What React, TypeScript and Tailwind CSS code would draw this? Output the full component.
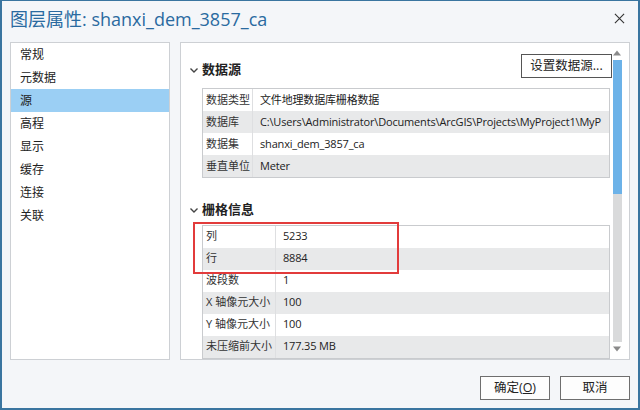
import React from "react";

const font = { fontFamily: '"Open Sans", "Noto Sans CJK SC", "Noto Sans", sans-serif' };

function Chevron() {
  return (
    <svg width="10" height="8" viewBox="0 0 10 8" className="shrink-0">
      <path d="M1.5 2.5 L5 6 L8.5 2.5" fill="none" stroke="#444" strokeWidth="1.4" />
    </svg>
  );
}

type Row = [string, string];

function Table({ rows, labelW }: { rows: Row[]; labelW: string }) {
  return (
    <div className="ml-[21px] mr-[2px] border border-[#c9cbce] bg-white text-[11px] text-[#222]">
      {rows.map(([k, v], i) => (
        <div
          key={i}
          className={`flex h-[22px] items-center ${i % 2 === 1 ? "bg-[#e8e9ea]" : "bg-white"}`}
        >
          <div className={`${labelW} shrink-0 h-full flex items-center pl-[3px] border-r border-[#dedfe1] text-[#333] text-[11px] whitespace-nowrap overflow-hidden`}>
            {k}
          </div>
          <div className="flex-1 min-w-0 pl-[7px] whitespace-nowrap overflow-hidden tracking-[-0.17px]">{v}</div>
        </div>
      ))}
    </div>
  );
}

export default function App() {
  const nav = ["常规", "元数据", "源", "高程", "显示", "缓存", "连接", "关联"];
  return (
    <div
      style={font}
      className="w-[640px] h-[410px] bg-[#f4f6f9] border-2 border-t border-[#3a75a0] flex flex-col overflow-hidden"
    >
      <div className="h-[41px] flex items-center justify-between pl-[8px] pr-[8px] pb-[6px] shrink-0">
        <div className="text-[18px] text-[#2a6aa0] leading-none">图层属性: shanxi_dem_3857_ca</div>
        <svg width="11" height="11" viewBox="0 0 12 12" className="mr-[5px]">
          <path d="M1 1 L11 11 M11 1 L1 11" stroke="#333" strokeWidth="1.2" />
        </svg>
      </div>
      <div className="flex gap-[10px] px-[8px] h-[318px] shrink-0">
        <div className="w-[160px] shrink-0 bg-white border border-[#cdd0d4] text-[12px] text-[#222]">
          {nav.map((n) => (
            <div
              key={n}
              className={`h-[23px] flex items-center pl-[9px] ${n === "源" ? "bg-[#9bcff4]" : ""}`}
            >
              {n}
            </div>
          ))}
        </div>
        <div className="flex-1 min-w-0 bg-white border border-[#cdd0d4] flex">
          <div className="flex-1 min-w-0 flex flex-col overflow-hidden pt-[11px] pb-[6px] relative">
            <div className="flex items-start justify-between pl-[8px] pr-[0px]">
              <div className="flex items-center gap-[3px] mt-[5px] h-[22px]">
                <Chevron />
                <span className="text-[13px] font-semibold text-[#222]">数据源</span>
              </div>
              <div className="h-[24px] w-[91px] border border-[#555] bg-white flex items-center justify-center text-[12.5px] text-[#222]">
                设置数据源...
              </div>
            </div>
            <div className="mt-[7px]">
              <Table
                labelW="w-[50px]"
                rows={[
                  ["数据类型", "文件地理数据库栅格数据"],
                  ["数据库", "C:\\Users\\Administrator\\Documents\\ArcGIS\\Projects\\MyProject1\\MyP"],
                  ["数据集", "shanxi_dem_3857_ca"],
                  ["垂直单位", "Meter"],
                ]}
              />
            </div>
            <div className="flex items-center gap-[3px] pl-[8px] mt-[22px] h-[22px]">
              <Chevron />
              <span className="text-[13px] font-semibold text-[#222]">栅格信息</span>
            </div>
            <div className="mt-[5px]">
              <Table
                labelW="w-[73px]"
                rows={[
                  ["列", "5233"],
                  ["行", "8884"],
                  ["波段数", "1"],
                  ["X 轴像元大小", "100"],
                  ["Y 轴像元大小", "100"],
                  ["未压缩前大小", "177.35 MB"],
                ]}
              />
            </div>
            <div className="absolute left-[12px] top-[179px] w-[206px] h-[52px] border-[2.5px] border-[#e23b3b]" />
          </div>
          <div className="w-[10px] shrink-0 mr-[7px] mt-[6px] mb-[6px] flex flex-col items-center">
            <svg width="10" height="8" viewBox="0 0 10 8">
              <path d="M5 1.5 L9 6.5 L1 6.5 Z" fill="#8a8a8a" />
            </svg>
            <div className="w-[9px] flex-1 bg-[#d9dadb] mt-[3px] mb-[3px] flex flex-col">
              <div className="h-[134px] bg-[#6cb2e8]" />
            </div>
            <svg width="10" height="8" viewBox="0 0 10 8">
              <path d="M1 1.5 L9 1.5 L5 6.5 Z" fill="#8a8a8a" />
            </svg>
          </div>
        </div>
      </div>
      <div className="flex justify-end gap-[10px] pr-[8px] mt-[16px]">
        <div className="w-[70px] h-[24px] border border-[#6e6e6e] bg-[#fdfdfd] flex items-center justify-center text-[12.5px] text-[#222]">
          确定(<span className="underline">O</span>)
        </div>
        <div className="w-[70px] h-[24px] border border-[#6e6e6e] bg-[#fdfdfd] flex items-center justify-center text-[12.5px] text-[#222]">
          取消
        </div>
      </div>
    </div>
  );
}
